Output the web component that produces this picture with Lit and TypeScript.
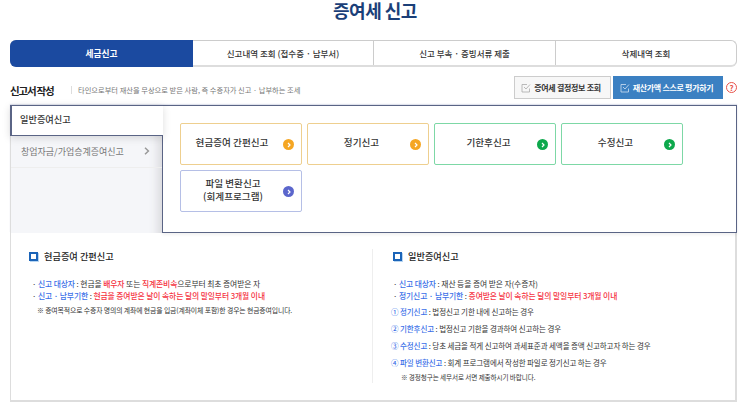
import { LitElement, html, css } from "lit";
import { customElement } from "lit/decorators.js";

const chevron = (cls: string) => html`<span class="dot ${cls}"><svg width="6" height="6" viewBox="0 0 6 6"><path d="M2 1 L4 3 L2 5" fill="none" stroke="#fff" stroke-width="1.2"/></svg></span>`;
const check = () => html`<svg class="chk" width="10" height="10" viewBox="0 0 10 10"><path d="M8.5 5.5V9H1V1.5h5" fill="none" stroke="currentColor" stroke-width=".8"/><path d="M3 4l2 2 4-4.5" fill="none" stroke="currentColor" stroke-width=".8"/></svg>`;

@customElement("app-root")
export class AppRoot extends LitElement {
  static styles = css`
    :host { display: block; width: 743px; height: 404px; overflow: hidden; background: #fff; font-family: "Noto Sans CJK KR", "Noto Sans", sans-serif; color: #333; box-sizing: border-box; padding: 0 6px 0 10px; }
    * { box-sizing: border-box; }
    h1 { margin: 0; height: 40px; padding: 0 0 0 3px; font-size: 18px; line-height: 20px; font-weight: 700; color: #1b3f78; text-align: center; letter-spacing: -0.5px; }
    .tabs { display: grid; grid-template-columns: 182px 180px 182px 1fr; height: 27px; border: 1px solid #ccc; border-bottom-width: 2px; border-bottom-color: #ddd; border-radius: 6px; font-size: 8.5px; font-weight: 500; }
    .tabs div { display: flex; align-items: center; justify-content: center; border-left: 1px solid #ccc; color: #333; }
    .tabs .plain { border-left: 0; }
    .tabs .on { background: #1b4aa0; color: #fff; border: 0; margin: -1px 0 -2px -1px; border-radius: 6px 0 0 6px; font-weight: 700; font-size: 8.7px; }
    .head { display: flex; align-items: center; height: 38px; }
    .head b { font-size: 10.5px; font-weight: 700; color: #222; letter-spacing: -1.2px; width: 61px; padding-top: 8px; }
    .desc { font-size: 7.25px; color: #777; border-left: 1px solid #ddd; padding-left: 6px; line-height: 8px; margin-top: 8px; }
    .btns { margin-left: auto; display: flex; align-items: center; gap: 2px; padding-top: 3px; }
    .btn { height: 23px; display: flex; align-items: center; justify-content: center; gap: 3px; padding-right: 3px; font-size: 8px; font-weight: 700; letter-spacing: -0.3px; }
    .btn.w { width: 97px; background: #f7f7f7; border: 1px solid #ccc; color: #333; }
    .btn.w .chk { color: #aaa; }
    .btn.b { width: 110px; background: #3b80c2; color: #fff; }
    .btn.b .chk { color: #cfe0f2; }
    .help { width: 11px; height: 11px; border: 1px solid #e8534a; border-radius: 50%; color: #e8534a; font-size: 8px; line-height: 9px; text-align: center; margin-left: 1px; font-weight: 700; }
    .panel { display: grid; grid-template-columns: 152px 575px; height: 128px; box-shadow: 0 -1px 1px #dfe2ec; }
    .side { display: flex; flex-direction: column; background: #f5f6f9; position: relative; z-index: 1; box-shadow: inset -14px 0 10px -10px #d8d8dc; border-left: 1px solid #ddd; }
    .t1 { height: 31px; margin: 0 -1px 0 -1px; background: #fff; border: 1px solid #5a6485; border-left-width: 2px; border-right: 0; font-size: 9.2px; font-weight: 500; color: #333; display: flex; align-items: center; padding-left: 8px; padding-bottom: 3px; box-shadow: 0 2px 8px #0002; }
    .t2 { height: 32px; border-bottom: 1px solid #eee; font-size: 9px; color: #777; display: flex; align-items: center; padding-left: 10px; padding-right: 12px; justify-content: space-between; padding-bottom: 1px; }
    .t2 svg { display: block; }
    .main { border: 1px solid #5a6485; padding: 17px 0 0 17px; display: grid; grid-template-columns: repeat(4, 122px); grid-auto-rows: 42px; gap: 5px; align-content: start; box-shadow: 0 2px 3px #0000000f; }
    .c { position: relative; border: 1px solid; border-radius: 2px; font-size: 9.6px; font-weight: 500; color: #333; display: flex; align-items: center; justify-content: center; text-align: center; line-height: 12.5px; padding: 0 13px 3px 0; }
    .c.long { padding-right: 18px; }
    .c.o { border-color: #eecf8f; } .c.g { border-color: #7dd8a6; } .c.p { border-color: #b5bfe6; padding-right: 16px; }
    .dot { position: absolute; right: 7px; top: 15px; width: 11px; height: 11px; border-radius: 50%; display: flex; align-items: center; justify-content: center; }
    .dot.o { background: #f5a623; } .dot.g { background: #0da84c; } .dot.p { background: #5b66cc; }
    .info { height: 169px; border: 1px solid #ddd; border-top: 0; border-width: 0 2px 2px 1px; display: grid; grid-template-columns: 1fr 1fr; padding-top: 16px; }
    .col { padding-left: 18px; font-size: 7.8px; color: #333; }
    .col + .col { border-left: 1px solid #eee; padding-left: 20px; margin-left: -1px; height: 134px; }
    .ttl { display: flex; align-items: center; gap: 6px; font-size: 9.2px; font-weight: 500; color: #222; height: 14px; margin-bottom: 15px; }
    .sq { width: 9px; height: 9px; border: 2px solid #1b64b8; box-shadow: 1px 1px 0 #b8d6f2; }
    .l { height: 12px; line-height: 12px; padding-left: 3px; white-space: nowrap; letter-spacing: -0.1px; }
    .col + .col .l { padding-left: 0; }
    .bl { color: #3a6fe8; font-weight: 500; } .rd { color: #f5323f; font-weight: 500; }
    .n { height: 17px; line-height: 17px; white-space: nowrap; font-size: 7.5px; letter-spacing: -0.1px; margin-left: -2px; }
    .sp { margin-top: 1px; }
    .note { font-size: 6.85px; height: 15px; line-height: 16px; padding-left: 8px; white-space: nowrap; letter-spacing: -0.1px; }
    .col + .col .note { font-size: 6.6px; padding-left: 8px; line-height: 12px; }
  `;
  render() {
    return html`
      <h1>증여세 신고</h1>
      <div class="tabs"><div class="on">세금신고</div><div class="plain">신고내역 조회 (접수증 · 납부서)</div><div>신고 부속 · 증빙서류 제출</div><div>삭제내역 조회</div></div>
      <div class="head"><b>신고서 작성</b><span class="desc">타인으로부터 재산을 무상으로 받은 사람, 즉 수증자가 신고 · 납부하는 조세</span>
        <div class="btns"><div class="btn w">${check()}증여세 결정정보 조회</div><div class="btn b">${check()}재산가액 스스로 평가하기</div><div class="help">?</div></div></div>
      <div class="panel">
        <div class="side"><div class="t1">일반증여신고</div><div class="t2"><span>창업자금/가업승계증여신고</span><svg width="6" height="8" viewBox="0 0 6 8"><path d="M1 .8 L4.4 4 L1 7.2" fill="none" stroke="#999" stroke-width="1.5"/></svg></div></div>
        <div class="main">
          <div class="c o long"><span>현금증여 간편신고</span>${chevron("o")}</div><div class="c o"><span>정기신고</span>${chevron("o")}</div><div class="c g"><span>기한후신고</span>${chevron("g")}</div><div class="c g"><span>수정신고</span>${chevron("g")}</div>
          <div class="c p"><span>파일 변환신고<br />(회계프로그램)</span>${chevron("p")}</div>
        </div>
      </div>
      <div class="info">
        <div class="col">
          <div class="ttl"><span class="sq"></span>현금증여 간편신고</div>
          <div class="l">· <span class="bl">신고 대상자</span> : 현금을 <span class="rd">배우자</span> 또는 <span class="rd">직계존비속</span>으로부터 최초 증여받은 자</div>
          <div class="l">· <span class="bl">신고 · 납부기한</span> : <span class="rd">현금을 증여받은 날이 속하는 달의 말일부터 3개월 이내</span></div>
          <div class="note">※ 증여목적으로 수증자 명의의 계좌에 현금을 입금(계좌이체 포함)한 경우는 현금증여입니다.</div>
        </div>
        <div class="col">
          <div class="ttl"><span class="sq"></span>일반증여신고</div>
          <div class="l">· <span class="bl">신고 대상자</span> : 재산 등을 증여 받은 자(수증자)</div>
          <div class="l">· <span class="bl">정기신고 · 납부기한</span> : <span class="rd">증여받은 날이 속하는 달의 말일부터 3개월 이내</span></div>
          <div class="n sp"><span class="bl">① 정기신고</span> : 법정신고 기한 내에 신고하는 경우</div>
          <div class="n"><span class="bl">② 기한후신고</span> : 법정신고 기한을 경과하여 신고하는 경우</div>
          <div class="n"><span class="bl">③ 수정신고</span> : 당초 세금을 적게 신고하여 과세표준과 세액을 증액 신고하고자 하는 경우</div>
          <div class="n"><span class="bl">④ 파일 변환신고</span> : 회계 프로그램에서 작성한 파일로 정기신고 하는 경우</div>
          <div class="note">※ 경정청구는 세무서로 서면 제출하시기 바랍니다.</div>
        </div>
      </div>`;
  }
}
